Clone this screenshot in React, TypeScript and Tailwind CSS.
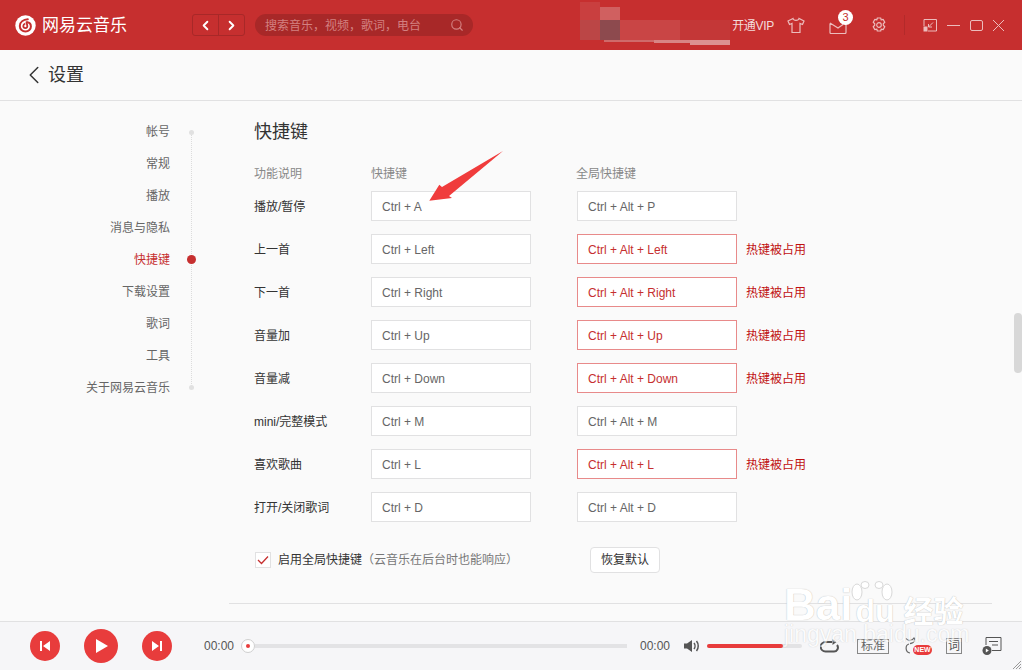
import { ChevronLeft, ChevronRight, Search } from 'lucide-react'

const font = { fontFamily: '"Liberation Sans", "Noto Sans CJK SC", sans-serif' }

const navItems = ['帐号', '常规', '播放', '消息与隐私', '快捷键', '下载设置', '歌词', '工具', '关于网易云音乐']

const rows = [
  { name: '播放/暂停', key: 'Ctrl + A', global: 'Ctrl + Alt + P', taken: false },
  { name: '上一首', key: 'Ctrl + Left', global: 'Ctrl + Alt + Left', taken: true },
  { name: '下一首', key: 'Ctrl + Right', global: 'Ctrl + Alt + Right', taken: true },
  { name: '音量加', key: 'Ctrl + Up', global: 'Ctrl + Alt + Up', taken: true },
  { name: '音量减', key: 'Ctrl + Down', global: 'Ctrl + Alt + Down', taken: true },
  { name: 'mini/完整模式', key: 'Ctrl + M', global: 'Ctrl + Alt + M', taken: false },
  { name: '喜欢歌曲', key: 'Ctrl + L', global: 'Ctrl + Alt + L', taken: true },
  { name: '打开/关闭歌词', key: 'Ctrl + D', global: 'Ctrl + Alt + D', taken: false },
]

const Logo = () => (
  <svg width="21" height="21" viewBox="0 0 21 21">
    <circle cx="10.5" cy="10.5" r="10.200" fill="#fff" />
    <path d="M12.800 4.300C8.500 4.600 4.800 7 4.800 11c0 3.200 2.600 5.500 5.700 5.500s5.400-2.400 5.400-5c0-2.400-1.800-4-3.800-4.200" fill="none" stroke="#c62f2f" strokeWidth="2" strokeLinecap="round" />
    <path d="M11.400 6.500 12.300 10.700c.3 1.300-.6 2.400-1.800 2.400S8.300 12.200 8.300 11s.8-2 2-2.300" fill="none" stroke="#c62f2f" strokeWidth="1.800" />
  </svg>
)

const HeaderRight = () => (
  <div className="ml-auto flex items-center text-[#ecbcbc]">
    <span className="text-[12px] leading-none tracking-[-0.3px] mr-[13px] pt-[2px] text-[#f3dcdc]">开通VIP</span>
    <svg width="18" height="17" viewBox="0 0 18 17" fill="none" stroke="currentColor" strokeWidth="1.200" className="mr-[24px]">
      <path d="M6 1.500 1 4l1.500 3.500L5 6.500V15.500h8V6.500l2.500 1L17 4l-5-2.500c-.5 2.500-5.500 2.500-6 0Z" />
    </svg>
    <div className="relative mr-[24px]">
      <svg width="18" height="14" viewBox="0 0 18 14" fill="none" stroke="currentColor" strokeWidth="1.200" className="mt-[3px]">
        <path d="M1 3.500V12.500a1 1 0 0 0 1 1h14a1 1 0 0 0 1-1V3.500M1 3 9 8l5-3.500" />
      </svg>
      <span className="absolute left-[9px] top-[-7px] w-[15px] h-[15px] rounded-full bg-white text-[#c62f2f] text-[11px] leading-[15px] text-center">3</span>
    </div>
    <svg width="16" height="16" viewBox="0 0 16 16" fill="none" stroke="currentColor" strokeWidth="1.200" className="mr-[17px]">
      <path d="M6.300 1h3.400l.5 2 1.900-.6 1.700 2.900-1.500 1.400v1.600l1.500 1.400-1.700 2.900-1.900-.6-.5 2H6.300l-.5-2-1.900.6-1.700-2.900 1.500-1.400V6.700L2.200 5.300l1.700-2.900 1.900.6Z" strokeLinejoin="round" />
      <circle cx="8" cy="8" r="2.300" />
    </svg>
    <div className="w-px h-[20px] bg-[#b32a2a] mr-[18px]" />
    <svg width="14" height="13" viewBox="0 0 14 13" fill="none" stroke="currentColor" className="mr-[10px]">
      <path d="M3 .5H13.500V12H5M1 7V.5H3" />
      <path d="M10 3.500 5.500 8M5.500 5v3H9" />
      <path d="M.5 7.500H4.500V12.500H.5Z" fill="currentColor" stroke="none" />
    </svg>
    <div className="w-[13px] h-px bg-current mr-[10px]" />
    <div className="w-[13px] h-[11px] border border-current rounded-[2px] mr-[9px]" />
    <svg width="13" height="13" viewBox="0 0 13 13" stroke="currentColor" className="mr-[17px]">
      <path d="M1 1 12 12M12 1 1 12" />
    </svg>
  </div>
)

const Header = () => (
  <header className="h-[50px] shrink-0 bg-[#c62f2f] flex items-center pl-[15px]">
    <Logo />
    <span className="ml-[6px] w-[150px] text-[17px] leading-none text-white">网易云音乐</span>
    <div className="flex h-[22px] w-[53px] border border-[#a82828] rounded-[3px] text-white">
      <div className="flex-1 flex items-center justify-center border-r border-[#a82828]">
        <ChevronLeft size={15} strokeWidth={3} />
      </div>
      <div className="flex-1 flex items-center justify-center">
        <ChevronRight size={15} strokeWidth={3} />
      </div>
    </div>
    <div className="ml-[10px] w-[218px] h-[22px] rounded-full bg-[#a82828] flex items-center pl-[10px] pr-[9px] text-[12px] text-[#d38080]">
      <span className="leading-none pt-px">搜索音乐，视频，歌词，电台</span>
      <Search size={14} className="ml-auto" />
    </div>
    <HeaderRight />
  </header>
)

const Sidebar = () => (
  <aside className="w-[229px] shrink-0 pt-[15px] flex">
    <ul className="w-[170px] text-right text-[12px] text-[#666]">
      {navItems.map((item) => (
        <li key={item} className={`h-[32px] leading-[32px] ${item === '快捷键' ? 'text-[#c62f2f]' : ''}`}>
          {item}
        </li>
      ))}
    </ul>
    <div className="relative ml-[17px] mt-[16px] w-[8px] h-[256px] flex flex-col items-center justify-between">
      <div className="absolute left-[3.500px] top-0 bottom-0 border-l border-dotted border-[#dcdcdc]" />
      <span className="relative w-[5px] h-[5px] mt-[-2px] rounded-full bg-[#e1e1e1]" />
      <span className="absolute left-[-0.500px] top-[123px] w-[9px] h-[9px] rounded-full bg-[#c62f2f]" />
      <span className="relative w-[5px] h-[5px] mb-[-2px] rounded-full bg-[#e1e1e1]" />
    </div>
  </aside>
)

const KeyBox = ({ value, taken }: { value: string; taken?: boolean }) => (
  <div
    className={`w-[160px] h-[30px] bg-white border pl-[10px] text-[12px] leading-[30px] ${
      taken ? 'border-[#e88a8a] text-[#c62f2f]' : 'border-[#e1e1e2] text-[#666]'
    }`}
  >
    {value}
  </div>
)

const Shortcuts = () => (
  <div className="flex-1 min-w-0 flex flex-col">
    <div className="pl-[25px] pt-[21px]">
      <h2 className="text-[18px] leading-[20px] font-normal text-[#333]">快捷键</h2>
      <div className="mt-[24px] flex text-[12px] leading-[16px] text-[#888]">
        <span className="w-[117px]">功能说明</span>
        <span className="w-[205px]">快捷键</span>
        <span>全局快捷键</span>
      </div>
      <div className="mt-[9px] flex flex-col gap-[13px]">
        {rows.map((row) => (
          <div key={row.name} className="flex items-center">
            <span className="w-[117px] text-[12px] leading-none pt-[2px] text-[#333]">{row.name}</span>
            <KeyBox value={row.key} />
            <span className="w-[46px]" />
            <KeyBox value={row.global} taken={row.taken} />
            {row.taken && <span className="ml-[9px] text-[12px] leading-none pt-px text-[#c01010]">热键被占用</span>}
          </div>
        ))}
      </div>
      <div className="mt-[25px] flex items-center h-[26px]">
        <span className="ml-px w-[16px] h-[16px] bg-white border border-[#e1e1e2] flex items-center justify-center">
          <svg width="12" height="10" viewBox="0 0 12 10" fill="none" stroke="#c62f2f" strokeWidth="1.300">
            <path d="M1 5 4.500 8.500 11 1.500" />
          </svg>
        </span>
        <span className="ml-[7px] text-[12px] text-[#333]">启用全局快捷键</span>
        <span className="text-[12px] text-[#777]">（云音乐在后台时也能响应）</span>
        <button className="ml-[72px] w-[70px] h-[26px] bg-white border border-[#e1e1e2] rounded-[4px] text-[12px] text-[#333]">
          恢复默认
        </button>
      </div>
    </div>
    <div className="mt-auto mb-[17px] mr-[22px] border-t border-[#e1e1e2]" />
  </div>
)

const Scrollbar = () => (
  <div className="w-[8px] shrink-0 pt-[212px]">
    <div className="h-[60px] rounded-full bg-[#d8d8d8]" />
  </div>
)

const Player = () => (
  <footer className="relative h-[49px] shrink-0 bg-[#f6f6f8] border-t border-[#e1e1e2] flex items-center pl-[30px]">
    <div className="w-[30px] h-[30px] rounded-full bg-[#e83c3c] flex items-center justify-center">
      <svg width="12" height="12" viewBox="0 0 12 12" fill="#fff"><path d="M1 1h2v10H1ZM11 1v10L4 6Z" /></svg>
    </div>
    <div className="ml-[24px] w-[34px] h-[34px] rounded-full bg-[#e83c3c] flex items-center justify-center">
      <svg width="14" height="16" viewBox="0 0 14 16" fill="#fff" className="ml-[2px]"><path d="M1 1v14l12-7Z" /></svg>
    </div>
    <div className="ml-[24px] w-[30px] h-[30px] rounded-full bg-[#e83c3c] flex items-center justify-center">
      <svg width="12" height="12" viewBox="0 0 12 12" fill="#fff"><path d="M11 1H9v10h2ZM1 1v10l7-5Z" /></svg>
    </div>
    <span className="ml-[32px] w-[37px] text-[12px] text-[#555]">00:00</span>
    <div className="flex items-center w-[386px]">
      <span className="w-[14px] h-[14px] shrink-0 rounded-full bg-white border border-[#cfcfcf] flex items-center justify-center">
        <span className="w-[4px] h-[4px] rounded-full bg-[#e83c3c]" />
      </span>
      <div className="flex-1 h-[4px] bg-[#e3e3e5]" />
    </div>
    <span className="ml-[13px] w-[43px] text-[12px] text-[#555]">00:00</span>
    <svg width="17" height="14" viewBox="0 0 17 14" fill="#555">
      <path d="M1 4.500h3L9 1v12L4 9.500H1Z" />
      <path d="M11 4c1.300 1.600 1.300 4.400 0 6M13.500 2c2.300 2.800 2.300 7.200 0 10" fill="none" stroke="#555" strokeWidth="1.500" />
    </svg>
    <div className="ml-[7px] w-[95px] h-[4px] bg-[#e3e3e5] rounded-full">
      <div className="w-[76px] h-full bg-[#e83c3c] rounded-full" />
    </div>
    <svg width="19" height="14" viewBox="0 0 19 14" fill="none" stroke="#555" strokeWidth="2" className="ml-[18px]">
      <path d="M12 3H5.500a4 4 0 0 0 0 9.500h8a4 4 0 0 0 3.500-6.500" />
      <path d="M12.500 0v6l4-3Z" fill="#555" stroke="none" />
    </svg>
    <span className="ml-[18px] w-[32px] h-[15px] border border-[#888] text-[12px] leading-[13px] text-center text-[#666]">标准</span>
    <div className="relative ml-[15px] w-[18px] h-[18px]">
      <svg width="16" height="18" viewBox="0 0 16 18" fill="none" stroke="#666" strokeWidth="1.200">
        <path d="M2 1.500c2 2.500 6 2.500 8-.5 1.500 1.500.5 3-1 4.500-1 .8-2 1-3 1.200M5 7c-4 1-4 8 1 9" />
      </svg>
      <span className="absolute left-[9px] top-[8px] w-[19px] h-[10px] rounded-full bg-[#e83c3c] text-[7px] leading-[10px] font-bold text-center text-white">NEW</span>
    </div>
    <span className="ml-[24px] w-[16px] h-[16px] border border-[#888] text-[12px] leading-[14px] text-center text-[#555]">词</span>
    <svg width="20" height="20" viewBox="0 0 20 20" fill="none" stroke="#555" className="ml-[20px]">
      <path d="M4 9V1.500h15v13H10M7 5.500h9M10 9h6" />
      <circle cx="5" cy="14.500" r="4.500" fill="#555" stroke="none" />
      <path d="M3.800 12.500v4l3-2Z" fill="#fff" stroke="none" />
    </svg>
    <svg width="8" height="8" viewBox="0 0 8 8" stroke="#999" className="absolute right-[1px] bottom-[1px]">
      <path d="M0 8 8 0M3 8l5-5M6 8l2-2" />
    </svg>
  </footer>
)

// screenshot annotations that lie on top of the app
const Arrow = () => (
  <svg width="76" height="52" viewBox="0 0 76 52" className="absolute left-[428px] top-[151px]">
    <path d="M75 0 14 36 11.300 33.700 1.300 49.700 24 47 21 45Z" fill="#f03c3c" />
  </svg>
)

const Mosaic = () => (
  <div className="absolute left-[580px] top-0 w-[150px] h-[46px] overflow-hidden">
    <div className="flex h-[20px] items-end">
      <div className="w-[20px] h-[18px] bg-[#c93f3f]" />
      <div className="w-[20px] h-[13px] bg-[#d06060]" />
    </div>
    <div className="flex h-[20px]">
      <div className="w-[20px] bg-[#bb4646]" />
      <div className="w-[20px] bg-[#8d4a4e]" />
      <div className="w-[60px] bg-[#c94545]" />
      <div className="w-[50px] bg-[#c43737]" />
    </div>
    <div className="flex items-start">
      <div className="ml-[24px] w-[50px] h-[2px] bg-[#cf6a6a]" />
      <div className="w-[36px] h-[3px] bg-[#d88585]" />
      <div className="w-[40px] h-[5px] bg-[#dc9090]" />
    </div>
  </div>
)

const Watermark = () => (
  <div className="absolute left-[784px] top-[580px] w-[200px] h-[90px] text-white [text-shadow:0_0_1px_#aaaaaa] pointer-events-none">
    <div className="flex items-end h-[44px] mt-[3px] leading-none font-bold">
      <span className="text-[44px]">Bai</span>
      <span className="relative ml-[3px] text-[32px]">
        du
        <svg width="44" height="22" viewBox="0 0 44 22" fill="#fff" stroke="#d8d8d8" className="absolute left-[-4px] top-[-14px]">
          <ellipse cx="6" cy="11" rx="5" ry="8" />
          <ellipse cx="36" cy="11" rx="5" ry="8" />
          <ellipse cx="14" cy="4" rx="4" ry="3.500" />
          <ellipse cx="28" cy="4" rx="4" ry="3.500" />
        </svg>
      </span>
      <span className="ml-[9px] text-[30px]">经验</span>
    </div>
    <div className="-mt-[5px] text-[23px] leading-[24px] opacity-60">jingyan.baidu.com</div>
  </div>
)

export default function App() {
  return (
    <div className="relative w-[1022px] h-[670px] overflow-hidden flex flex-col bg-[#fafafa]" style={font}>
      <Header />
      <div className="h-[51px] shrink-0 border-b border-[#e1e1e2] flex items-center pl-[19px] text-[#333]">
        <ChevronLeft size={30} strokeWidth={1.200} />
        <span className="-ml-[1px] text-[18px] leading-none">设置</span>
      </div>
      <main className="flex-1 min-h-0 flex">
        <Sidebar />
        <Shortcuts />
        <Scrollbar />
      </main>
      <Player />
      <Mosaic />
      <Arrow />
      <Watermark />
    </div>
  )
}
